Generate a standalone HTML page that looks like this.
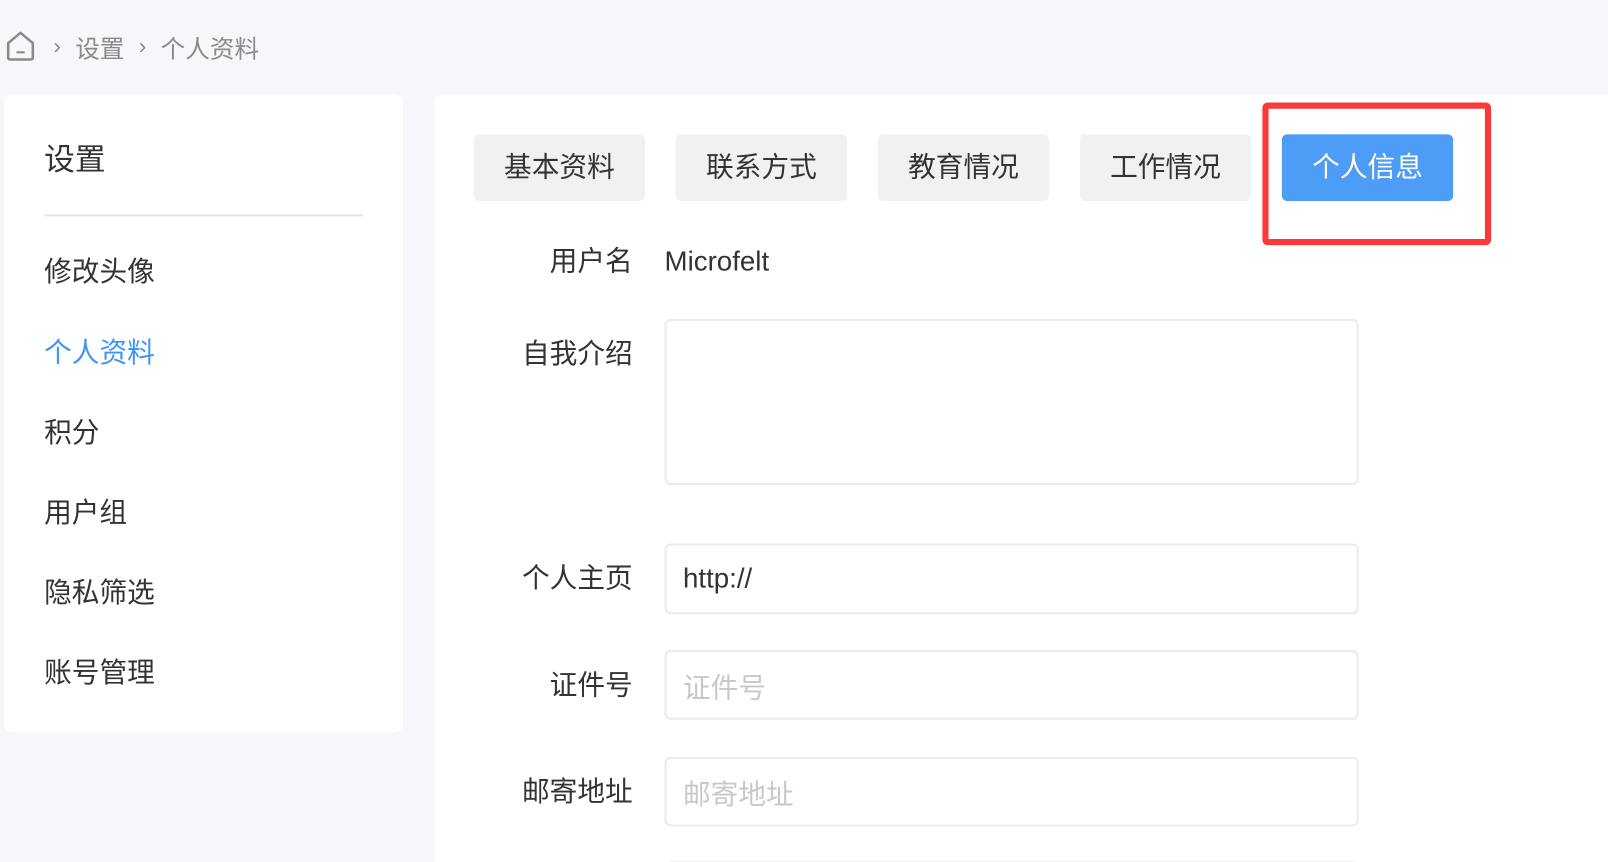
<!DOCTYPE html>
<html><head><meta charset="utf-8"><style>
*{box-sizing:border-box;margin:0;padding:0}
html,body{width:1608px;height:862px;overflow:hidden}
body{background:#f5f7fb;font-family:"Liberation Sans","Noto Sans CJK SC",sans-serif;color:#333;position:relative}
#w{position:absolute;left:0;top:0;width:1568px;height:841px;overflow:hidden;transform:scale(1.0255);transform-origin:0 0}
.abs{position:absolute}
.crumb{top:28px;left:6px;font-size:24px;color:#8a8a8a;display:flex;align-items:center;height:34px}
.side{left:4px;top:92px;width:389px;height:622px;background:#fff;border-radius:8px}
.item{position:absolute;left:43px;font-size:27px;color:#333;line-height:30px}
.main{left:424px;top:92px;width:1200px;height:800px;background:#fff;border-radius:8px}
.tab{position:absolute;top:131px;width:167px;height:65px;background:#f1f1f1;border-radius:5px;font-size:27px;text-align:center;line-height:65px;color:#333}
.lab{position:absolute;right:951px;font-size:27px;line-height:30px;color:#333}
.inp{position:absolute;left:648px;width:677px;border:2px solid #e8ebf0;border-radius:6px;font-size:27px;padding-left:16px;display:flex;align-items:center;background:#fff}
</style></head><body><div id="w">
<div class="abs crumb">
<svg width="28" height="30" viewBox="0 0 28 30"><path d="M2 12 L14 2 L26 12 V26 Q26 28 24 28 H4 Q2 28 2 26 Z" fill="none" stroke="#8a8a8a" stroke-width="2.5" stroke-linejoin="round"/><path d="M10 21 H18" stroke="#8a8a8a" stroke-width="2"/></svg>
<span style="margin-left:18px;font-size:22px">›</span><span style="margin-left:14px">设置</span><span style="margin-left:14px;font-size:22px">›</span><span style="margin-left:14px">个人资料</span>
</div>
<div class="abs side"></div>
<div class="abs" style="left:43px;top:131px;font-size:30px;color:#333">设置</div>
<div class="abs" style="left:43px;top:209px;width:311px;height:2px;background:#e6e6e6"></div>
<div class="item" style="top:250px">修改头像</div>
<div class="item" style="top:329px;color:#3d95f5">个人资料</div>
<div class="item" style="top:407px">积分</div>
<div class="item" style="top:485px">用户组</div>
<div class="item" style="top:563px">隐私筛选</div>
<div class="item" style="top:641px">账号管理</div>
<div class="abs main"></div>
<div class="tab" style="left:462px">基本资料</div>
<div class="tab" style="left:659px">联系方式</div>
<div class="tab" style="left:856px">教育情况</div>
<div class="tab" style="left:1053px">工作情况</div>
<div class="tab" style="left:1250px;background:#4d9cf5;color:#fff">个人信息</div>
<div class="abs" style="left:1231px;top:100px;width:223px;height:139px;border:6px solid #fa3a3a;border-radius:5px"></div>
<div class="lab" style="top:240px">用户名</div>
<div class="abs" style="left:648px;top:240px;font-size:27px;line-height:30px">Microfelt</div>
<div class="lab" style="top:330px">自我介绍</div>
<div class="inp" style="top:311px;height:162px"></div>
<div class="lab" style="top:549px">个人主页</div>
<div class="inp" style="top:530px;height:69px">http://</div>
<div class="lab" style="top:653px">证件号</div>
<div class="inp" style="top:634px;height:68px;color:#c8c8c8">证件号</div>
<div class="lab" style="top:757px">邮寄地址</div>
<div class="inp" style="top:738px;height:68px;color:#c8c8c8">邮寄地址</div>
<div class="inp" style="top:840px;height:68px"></div>
</div></body></html>
